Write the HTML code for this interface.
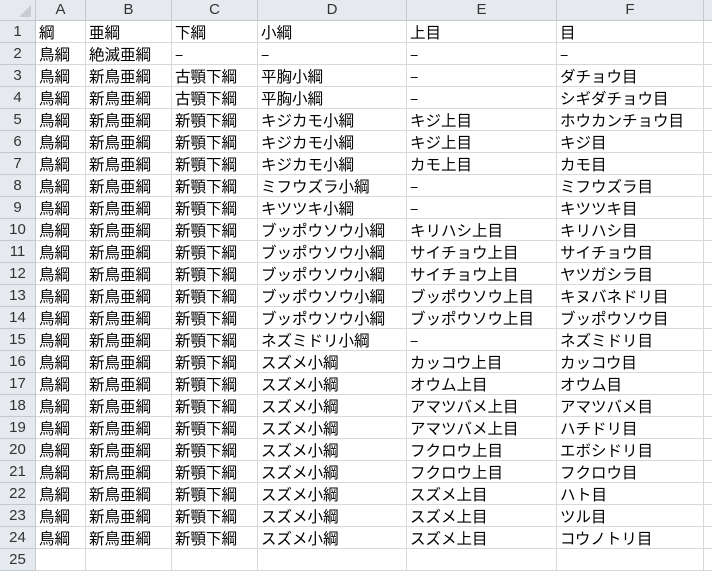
<!DOCTYPE html>
<html><head><meta charset="utf-8"><style>
body{margin:0;width:712px;height:561px;overflow:hidden;background:#fff;font-family:"Liberation Sans","Noto Sans CJK JP",sans-serif;}
.hdr{position:absolute;top:0;height:20px;background:#e6e9ee;border-right:1px solid #c4c9d0;border-bottom:1px solid #c4c9d0;box-sizing:content-box;color:#333;font-size:15px;text-align:center;line-height:20px;}
.rn{position:absolute;left:0;width:35px;height:21px;background:#e6e9ee;border-right:1px solid #c4c9d0;border-bottom:1px solid #c4c9d0;color:#333;font-size:15px;text-align:center;line-height:22px;}
.c{position:absolute;height:21px;border-right:1px solid #d8d8d8;border-bottom:1px solid #d8d8d8;font-family:"Noto Sans CJK JP",sans-serif;font-size:15.5px;line-height:22px;padding-left:3px;box-sizing:border-box;white-space:nowrap;overflow:visible;color:#000;}
</style></head><body>
<div id="g"></div>
<script>
var cols=[[36,86],[86,172],[172,258],[258,407],[407,557],[557,704],[704,760]];
var L="ABCDEFG";
var h='<div class="hdr" style="left:0;width:35px"><svg width="35" height="20"><polygon points="31,5 31,17 19,17" fill="#c8ccd2"/></svg></div>';
cols.forEach(function(c,i){h+='<div class="hdr" style="left:'+c[0]+'px;width:'+(c[1]-c[0]-1)+'px">'+(i<6?L[i]:'')+'</div>';});
var d=[["綱","亜綱","下綱","小綱","上目","目"],["鳥綱","絶滅亜綱","–","–","–","–"],
["鳥綱","新鳥亜綱","古顎下綱","平胸小綱","–","ダチョウ目"],["鳥綱","新鳥亜綱","古顎下綱","平胸小綱","–","シギダチョウ目"],
["鳥綱","新鳥亜綱","新顎下綱","キジカモ小綱","キジ上目","ホウカンチョウ目"],["鳥綱","新鳥亜綱","新顎下綱","キジカモ小綱","キジ上目","キジ目"],
["鳥綱","新鳥亜綱","新顎下綱","キジカモ小綱","カモ上目","カモ目"],["鳥綱","新鳥亜綱","新顎下綱","ミフウズラ小綱","–","ミフウズラ目"],
["鳥綱","新鳥亜綱","新顎下綱","キツツキ小綱","–","キツツキ目"],["鳥綱","新鳥亜綱","新顎下綱","ブッポウソウ小綱","キリハシ上目","キリハシ目"],
["鳥綱","新鳥亜綱","新顎下綱","ブッポウソウ小綱","サイチョウ上目","サイチョウ目"],["鳥綱","新鳥亜綱","新顎下綱","ブッポウソウ小綱","サイチョウ上目","ヤツガシラ目"],
["鳥綱","新鳥亜綱","新顎下綱","ブッポウソウ小綱","ブッポウソウ上目","キヌバネドリ目"],["鳥綱","新鳥亜綱","新顎下綱","ブッポウソウ小綱","ブッポウソウ上目","ブッポウソウ目"],
["鳥綱","新鳥亜綱","新顎下綱","ネズミドリ小綱","–","ネズミドリ目"],["鳥綱","新鳥亜綱","新顎下綱","スズメ小綱","カッコウ上目","カッコウ目"],
["鳥綱","新鳥亜綱","新顎下綱","スズメ小綱","オウム上目","オウム目"],["鳥綱","新鳥亜綱","新顎下綱","スズメ小綱","アマツバメ上目","アマツバメ目"],
["鳥綱","新鳥亜綱","新顎下綱","スズメ小綱","アマツバメ上目","ハチドリ目"],["鳥綱","新鳥亜綱","新顎下綱","スズメ小綱","フクロウ上目","エボシドリ目"],
["鳥綱","新鳥亜綱","新顎下綱","スズメ小綱","フクロウ上目","フクロウ目"],["鳥綱","新鳥亜綱","新顎下綱","スズメ小綱","スズメ上目","ハト目"],
["鳥綱","新鳥亜綱","新顎下綱","スズメ小綱","スズメ上目","ツル目"],["鳥綱","新鳥亜綱","新顎下綱","スズメ小綱","スズメ上目","コウノトリ目"],["","","","","",""]];
d.forEach(function(r,i){var y=21+i*22;
h+='<div class="rn" style="top:'+y+'px">'+(i+1)+'</div>';
cols.forEach(function(c,j){h+='<div class="c" style="top:'+y+'px;left:'+c[0]+'px;width:'+(c[1]-c[0])+'px;height:22px">'+(r[j]||'')+'</div>';});});
document.getElementById('g').innerHTML=h;
</script>
</body></html>
